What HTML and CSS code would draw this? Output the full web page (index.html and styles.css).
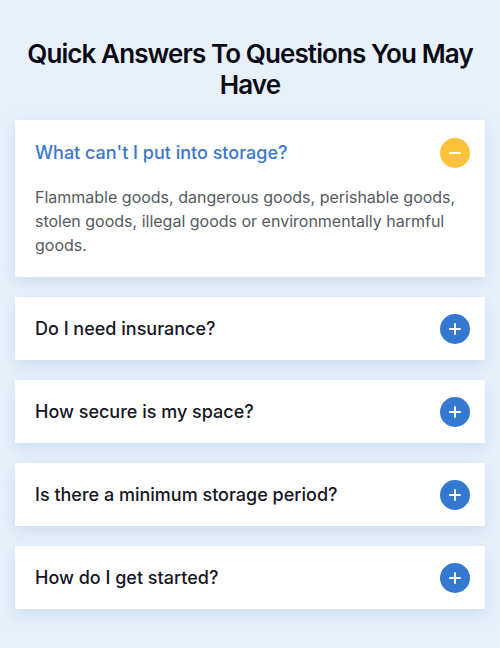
FILE: index.html
```html
<!DOCTYPE html>
<html lang="en">
<head>
<meta charset="utf-8">
<title>FAQ</title>
<link rel="stylesheet" href="styles.css">
</head>
<body>
<section class="faq">
  <h2 class="faq-title">Quick Answers To Questions You May Have</h2>
  <div class="faq-list">
    <div class="faq-item open">
      <div class="faq-head">
        <span class="faq-q">What can't I put into storage?</span>
        <span class="faq-toggle minus"></span>
      </div>
      <p class="faq-a">Flammable goods, dangerous goods, perishable goods, stolen goods, illegal goods or environmentally harmful goods.</p>
    </div>
    <div class="faq-item">
      <div class="faq-head">
        <span class="faq-q">Do I need insurance?</span>
        <span class="faq-toggle plus"></span>
      </div>
    </div>
    <div class="faq-item">
      <div class="faq-head">
        <span class="faq-q">How secure is my space?</span>
        <span class="faq-toggle plus"></span>
      </div>
    </div>
    <div class="faq-item">
      <div class="faq-head">
        <span class="faq-q">Is there a minimum storage period?</span>
        <span class="faq-toggle plus"></span>
      </div>
    </div>
    <div class="faq-item">
      <div class="faq-head">
        <span class="faq-q">How do I get started?</span>
        <span class="faq-toggle plus"></span>
      </div>
    </div>
  </div>
</section>
</body>
</html>
```
FILE: styles.css
```css
* { box-sizing: border-box; }

html, body {
  margin: 0;
  padding: 0;
  background: #e8f1fa;
}

body {
  font-family: Inter, "Noto Sans", sans-serif;
  color: #111122;
}

.faq {
  padding: 38px 15px 39px;
}

.faq-title {
  margin: 0 0 20px;
  padding: 0 2px;
  text-align: center;
  font-size: 26px;
  line-height: 31px;
  font-weight: 600;
  letter-spacing: -0.9px;
  color: #0a0a14;
}

.faq-list {
  display: flex;
  flex-direction: column;
  gap: 20px;
}

.faq-item {
  background: #fff;
  padding: 16px 15px 16px 20px;
  box-shadow: 0 6px 14px rgba(150, 185, 225, 0.35);
}

.faq-item.open {
  padding-top: 17px;
  padding-bottom: 20px;
}

.faq-head {
  display: flex;
  align-items: center;
  justify-content: space-between;
  min-height: 31px;
}

.faq-q {
  font-size: 18px;
  line-height: 24px;
  font-weight: 500;
  letter-spacing: 0;
  color: #16161f;
}

.open .faq-q {
  color: #3a78cd;
}

.faq-toggle {
  position: relative;
  width: 30px;
  height: 30px;
  border-radius: 50%;
  flex: none;
  background: #3478d0;
}

.faq-toggle.minus {
  background: #fdc23a;
}

.faq-toggle::before,
.faq-toggle::after {
  content: "";
  position: absolute;
  left: 50%;
  top: 50%;
  width: 12px;
  height: 2px;
  margin: -1px 0 0 -6px;
  background: #fff;
  border-radius: 1px;
}

.faq-toggle.plus::after {
  width: 2px;
  height: 12px;
  margin: -6px 0 0 -1px;
}

.faq-toggle.minus::after {
  display: none;
}

.faq-a {
  margin: 17px 0 0;
  font-size: 16px;
  line-height: 24px;
  color: #555a60;
  letter-spacing: 0;
}
```
